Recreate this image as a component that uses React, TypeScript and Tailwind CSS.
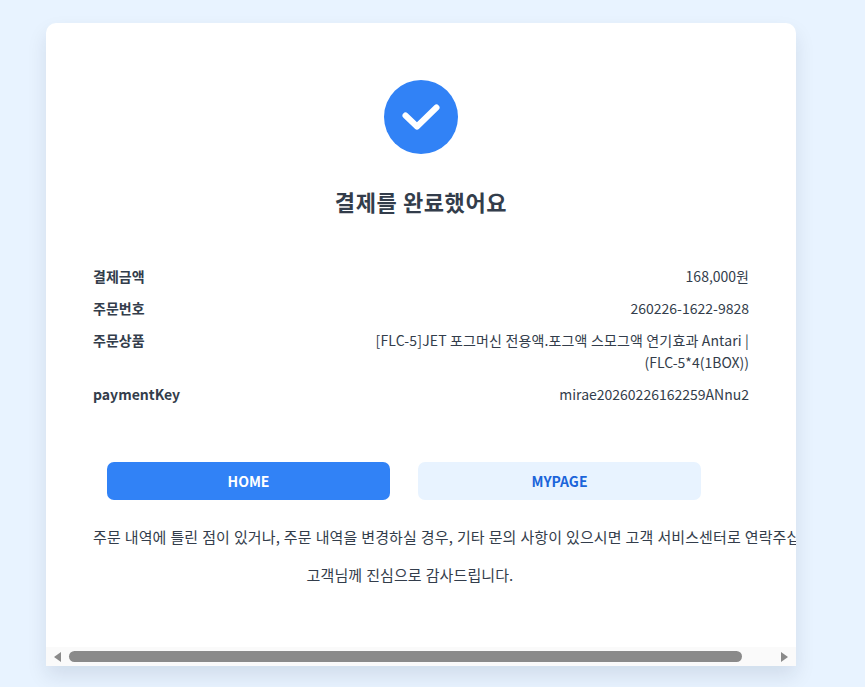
const font = { fontFamily: '"Noto Sans CJK KR", "Noto Sans", sans-serif' }

const rows = [
  { label: "결제금액", value: <>168,000원</> },
  { label: "주문번호", value: <>260226-1622-9828</> },
  {
    label: "주문상품",
    value: (
      <>
        <span className="tracking-[0.15px]">[FLC-5]JET 포그머신 전용액.포그액 스모그액 연기효과 Antari |</span> (FLC-5*4(1BOX))
      </>
    ),
  },
  { label: "paymentKey", value: <>mirae20260226162259ANnu2</> },
]

export default function App() {
  return (
    <div className="h-[687px] overflow-hidden bg-[#e8f3ff] pl-[46px] pt-[23px]" style={font}>
      <div className="flex h-[643px] w-[750px] flex-col overflow-hidden rounded-t-[10px] bg-white shadow-[0_10px_20px_rgba(0,27,55,0.1)]">
        <div className="flex-1 overflow-hidden">
          <div className="flex flex-col items-center pt-[57px]">
            <div className="flex size-[74px] items-center justify-center rounded-full bg-[#3182f6]">
              <svg width="40" height="30" viewBox="0 0 40 30" fill="none">
                <path d="M4.5 13.5 L16 24.5 L35.5 5.5" stroke="white" strokeWidth="6" strokeLinecap="round" strokeLinejoin="round" />
              </svg>
            </div>
            <h2 className="mt-[28px] text-[22px] leading-[38px] font-bold tracking-[0.6px] text-[#333d4b]">결제를 완료했어요</h2>
          </div>

          <div className="mt-[45px] flex flex-col gap-[10px] px-[47px]">
            {rows.map((r) => (
              <div key={r.label} className="flex justify-between gap-4 text-sm leading-[22px] text-[#333d4b]">
                <span className="shrink-0 font-bold">{r.label}</span>
                <span className="w-[380px] text-right">{r.value}</span>
              </div>
            ))}
          </div>

          <div className="mt-[57px] flex gap-[28px] pl-[61px]">
            <button className="h-[38px] w-[283px] rounded-[7px] bg-[#3182f6] text-sm font-bold text-white">HOME</button>
            <button className="h-[38px] w-[283px] rounded-[7px] bg-[#e8f3ff] text-sm font-bold text-[#1b64da]">MYPAGE</button>
          </div>

          <div className="mt-[25px] ml-[47px] w-[634px] text-[15px] leading-[24px] tracking-[0.1px] [word-spacing:0.5px] text-[#333d4b]">
            <p className="whitespace-nowrap">주문 내역에 틀린 점이 있거나, 주문 내역을 변경하실 경우, 기타 문의 사항이 있으시면 고객 서비스센터로 연락주십시오.</p>
            <p className="mt-[14px] text-center">고객님께 진심으로 감사드립니다.</p>
          </div>
        </div>

        {/* scrollbar */}
        <div className="flex h-[19px] items-center bg-[#fafafa] px-[8px]">
          <svg width="7" height="10" viewBox="0 0 7 10"><path d="M0 5 L7 0 V10 Z" fill="#8a8a8a" /></svg>
          <div className="ml-[8px] h-[11px] w-[673px] rounded-full bg-[#8a8a8a]" />
          <div className="flex-1" />
          <svg width="7" height="10" viewBox="0 0 7 10"><path d="M7 5 L0 0 V10 Z" fill="#8a8a8a" /></svg>
        </div>
      </div>
    </div>
  )
}
